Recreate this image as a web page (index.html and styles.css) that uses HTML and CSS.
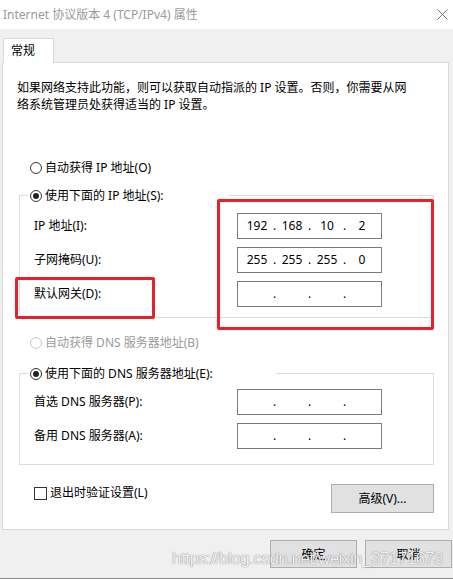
FILE: index.html
```html
<!DOCTYPE html>
<html lang="zh-CN">
<head>
<meta charset="utf-8">
<title>Internet 协议版本 4 (TCP/IPv4) 属性</title>
<link rel="stylesheet" href="styles.css">
</head>
<body>
<div class="window">
  <div class="titlebar">
    <span class="title">Internet 协议版本 4 (TCP/IPv4) 属性</span>
    <svg class="close" width="11" height="11" viewBox="0 0 11 11"><path d="M0.5 0.5 L10.5 10.5 M10.5 0.5 L0.5 10.5" stroke="#7a7a7a" stroke-width="1" fill="none"/></svg>
  </div>
  <div class="tabs"><div class="tab">常规</div></div>
  <div class="panel">
    <p class="intro">如果网络支持此功能，则可以获取自动指派的 IP 设置。否则，你需要从网<br>络系统管理员处获得适当的 IP 设置。</p>
    <div class="radio-row first"><span class="radio"></span>自动获得 IP 地址(O)</div>
    <fieldset class="group ip">
      <legend class="legend legend-ip"><span class="radio checked"></span>使用下面的 IP 地址(S):</legend>
      <div class="fields">
        <label>IP 地址(I):</label>
        <div class="ipbox"><span class="seg">192</span><span class="dot">.</span><span class="seg">168</span><span class="dot">.</span><span class="seg">10</span><span class="dot">.</span><span class="seg">2</span></div>
        <label>子网掩码(U):</label>
        <div class="ipbox"><span class="seg">255</span><span class="dot">.</span><span class="seg">255</span><span class="dot">.</span><span class="seg">255</span><span class="dot">.</span><span class="seg">0</span></div>
        <label>默认网关(D):</label>
        <div class="ipbox"><span class="seg"></span><span class="dot">.</span><span class="seg"></span><span class="dot">.</span><span class="seg"></span><span class="dot">.</span><span class="seg"></span></div>
      </div>
    </fieldset>
    <div class="radio-row disabled"><span class="radio"></span>自动获得 DNS 服务器地址(B)</div>
    <fieldset class="group dns">
      <legend class="legend legend-dns"><span class="radio checked"></span>使用下面的 DNS 服务器地址(E):</legend>
      <div class="fields">
        <label>首选 DNS 服务器(P):</label>
        <div class="ipbox"><span class="seg"></span><span class="dot">.</span><span class="seg"></span><span class="dot">.</span><span class="seg"></span><span class="dot">.</span><span class="seg"></span></div>
        <label>备用 DNS 服务器(A):</label>
        <div class="ipbox"><span class="seg"></span><span class="dot">.</span><span class="seg"></span><span class="dot">.</span><span class="seg"></span><span class="dot">.</span><span class="seg"></span></div>
      </div>
    </fieldset>
    <div class="bottom-row">
      <div class="check"><span class="box"></span>退出时验证设置(L)</div>
      <div class="btn adv">高级(V)...</div>
    </div>
  </div>
  <div class="actions">
    <div class="btn">确定</div>
    <div class="btn">取消</div>
  </div>
  <div class="mark mark-ip"></div>
  <div class="mark mark-gw"></div>
  <div class="watermark">https://blog.csdn.net/weixin_37171673</div>
</div>
</body>
</html>
```

FILE: styles.css
```css
* { box-sizing: border-box; }
html, body { margin: 0; padding: 0; }
body {
  width: 453px;
  height: 579px;
  overflow: hidden;
  background: #f0f0f0;
  font-family: "Noto Sans", "Noto Sans CJK SC", sans-serif;
  font-size: 12px;
  color: #000;
}
.window {
  position: relative;
  height: 579px;
  border-bottom: 1px solid #8a8a8a;
}
.titlebar {
  height: 29px;
  background: #fff;
  display: flex;
  align-items: center;
  justify-content: space-between;
  padding: 0 5px 0 3px;
}
.title { color: #9a9a9a; line-height: 17px; }
.close { display: block; }
.tabs { display: flex; padding: 9px 0 0 3px; }
.tab {
  width: 51px;
  height: 25px;
  margin-bottom: -1px;
  background: #fff;
  border: 1px solid #d9d9d9;
  border-bottom: none;
  padding: 3px 0 0 7px;
  line-height: 17px;
  position: relative;
  z-index: 1;
}
.panel {
  margin-left: 2px;
  width: 447px;
  height: 468px;
  background: #fff;
  border: 1px solid #d9d9d9;
  padding: 0 14px 0 16px;
}
.intro { margin: 16px 0 0 -2px; line-height: 17px; }
.radio-row {
  display: flex;
  align-items: center;
  height: 18px;
  line-height: 18px;
  padding-left: 11px;
}
.radio-row.first { margin-top: 46px; }
.radio-row.disabled { margin-top: 16px; color: #9a9a9a; }
.radio-row.disabled .radio { border-color: #c8c8c8; }
.radio {
  position: relative;
  flex: none;
  width: 12px;
  height: 12px;
  border: 1px solid #333;
  border-radius: 50%;
  background: #fff;
  margin-right: 3px;
}
.radio.checked::after {
  content: "";
  position: absolute;
  left: 2px;
  top: 2px;
  width: 6px;
  height: 6px;
  border-radius: 50%;
  background: #222;
}
.group {
  margin: 0;
  min-width: 0;
  border: 1px solid #dcdcdc;
  padding: 0 0 10px 8px;
}
.group.ip { margin-top: 9px; }
.group.dns { margin-top: 12px; padding-bottom: 15px; }
.legend {
  display: flex;
  align-items: center;
  height: 19px;
  padding: 0 0 0 2px;
  line-height: 18px;
}
.legend-ip { width: 200px; }
.legend-dns { width: 248px; }
.fields {
  display: grid;
  grid-template-columns: 203px 145px;
  row-gap: 8px;
  margin: 8px 0 0 6px;
}
.dns .fields { margin-top: 6px; }
.fields label { line-height: 26px; }
.ipbox {
  height: 26px;
  border: 1px solid #7a7a7a;
  background: #fff;
  display: flex;
  padding-left: 6px;
  line-height: 24px;
}
.seg { width: 26px; text-align: center; }
.dot { width: 9px; text-align: center; }
.bottom-row {
  display: flex;
  justify-content: space-between;
  align-items: flex-start;
  margin-top: 19px;
}
.check {
  display: flex;
  align-items: center;
  height: 18px;
  line-height: 18px;
  margin-left: 15px;
}
.box {
  width: 13px;
  height: 13px;
  border: 1px solid #333;
  margin-right: 3px;
  background: #fff;
}
.btn {
  display: flex;
  align-items: center;
  justify-content: center;
  background: #e1e1e1;
  border: 1px solid #adadad;
  line-height: 17px;
}
.adv { width: 103px; height: 29px; }
.actions {
  display: flex;
  justify-content: flex-end;
  gap: 8px;
  margin-top: 10px;
  padding-right: 1px;
}
.actions .btn { width: 87px; height: 28px; }
.mark {
  position: absolute;
  border: 3px solid #e8202a;
  border-radius: 2px;
}
.mark-ip { left: 217px; top: 199px; width: 217px; height: 131px; }
.mark-gw { left: 15px; top: 277px; width: 140px; height: 42px; }
.watermark {
  position: absolute;
  left: 172px;
  top: 549px;
  font-family: "Liberation Sans", Arial, sans-serif;
  font-size: 17px;
  letter-spacing: -0.5px;
  line-height: 20px;
  color: rgba(255, 255, 255, 0.92);
  text-shadow: 0 0 1px rgba(0, 0, 0, 0.45), 0 0 1px rgba(0, 0, 0, 0.25);
  white-space: nowrap;
}
```
